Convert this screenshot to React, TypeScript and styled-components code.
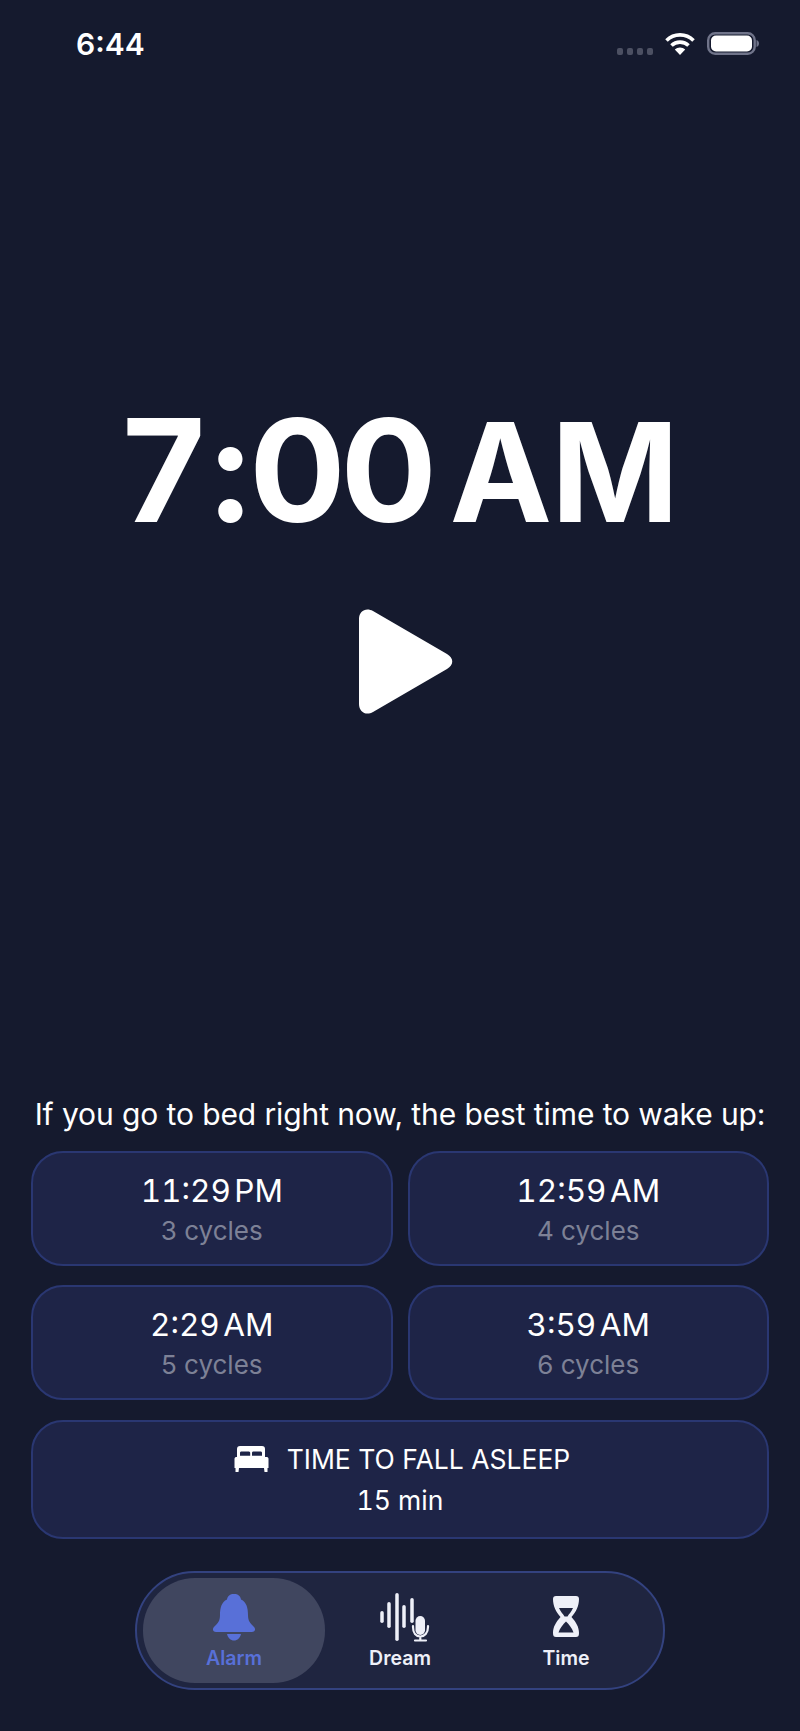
import React from "react";
import styled, { createGlobalStyle } from "styled-components";

const GlobalStyle = createGlobalStyle`
  html, body {
    margin: 0;
    padding: 0;
    background: #151a2e;
  }
`;

const Screen = styled.div`
  width: 800px;
  height: 1731px;
  background: #151a2e;
  color: #fff;
  font-family: Inter, "Liberation Sans", sans-serif;
  display: flex;
  flex-direction: column;
  overflow: hidden;
`;

const StatusBar = styled.div`
  height: 32px;
  padding: 26px 41px 0 76px;
  display: flex;
  align-items: flex-start;
  justify-content: space-between;
`;

const Clock = styled.div`
  font-size: 30px;
  line-height: 36px;
  font-weight: 600;
`;

const StatusIcons = styled.div`
  display: flex;
  align-items: center;
  gap: 12px;
  padding-top: 6px;
`;

const SignalDots = styled.div`
  display: flex;
  gap: 4px;
  padding-top: 16px;
`;

const SignalDot = styled.span`
  width: 6px;
  height: 7px;
  border-radius: 2px;
  background: #4c5062;
`;

const Hero = styled.div`
  margin-top: 340px;
  display: flex;
  flex-direction: column;
  align-items: center;
`;

const BigTime = styled.div`
  font-size: 143px;
  line-height: 143px;
  font-weight: 700;
  letter-spacing: -5px;
  word-spacing: -11px;
  white-space: nowrap;
`;

const BigHour = styled.span`
  letter-spacing: 1px;
`;

const Meridiem = styled.span`
  font-size: 137px;
  letter-spacing: -1px;
`;

const PlayButton = styled.div`
  margin-top: 65px;
  margin-left: 12px;
  display: flex;
`;

const Bottom = styled.div`
  margin-top: auto;
  padding: 0 31px 41px;
  display: flex;
  flex-direction: column;
`;

const Prompt = styled.div`
  font-size: 30px;
  line-height: 34px;
  letter-spacing: -0.1px;
  text-align: center;
  white-space: nowrap;
  margin-bottom: 20px;
`;

const CardGrid = styled.div`
  display: grid;
  grid-template-columns: 1fr 1fr;
  gap: 19px 15px;
`;

const Card = styled.div`
  box-sizing: border-box;
  height: 115px;
  padding-top: 3px;
  border-radius: 32px;
  background: #1e2447;
  border: 2px solid #2a3772;
  display: flex;
  flex-direction: column;
  align-items: center;
  justify-content: center;
`;

const CardTime = styled.div`
  font-size: 31.5px;
  line-height: 40px;
  font-variant-numeric: tabular-nums;
  word-spacing: -5px;
`;

const CardCycles = styled.div`
  font-size: 26px;
  line-height: 38px;
  color: #7d8196;
  padding-top: 1px;
`;

const SleepCard = styled(Card)`
  height: 119px;
  margin-top: 20px;
  padding-top: 1px;
`;

const SleepTitle = styled.div`
  display: flex;
  align-items: center;
  gap: 18px;
  padding-left: 4px;
  font-size: 26.5px;
  line-height: 40px;
`;

const SleepValue = styled.div`
  font-size: 26.5px;
  line-height: 42px;
  font-variant-numeric: tabular-nums;
`;

const NavBar = styled.div`
  box-sizing: border-box;
  align-self: center;
  margin-top: 32px;
  width: 530px;
  height: 119px;
  padding: 5px 6px;
  border-radius: 60px;
  background: #1f2540;
  border: 2px solid #33427f;
  display: grid;
  grid-template-columns: 182px 150px 182px;
`;

const NavItem = styled.div<{ $active?: boolean }>`
  border-radius: 52px;
  background: ${(p) => (p.$active ? "#40465f" : "transparent")};
  color: ${(p) => (p.$active ? "#5870d8" : "#eef0f8")};
  display: flex;
  flex-direction: column;
  align-items: center;
  padding-top: 12px;
  font-size: 19.5px;
  line-height: 24px;
  font-weight: 600;
`;

const NavIcon = styled.svg`
  width: 60px;
  height: 56px;
  fill: currentColor;
`;

function WifiIcon() {
  return (
    <svg width="30" height="23" viewBox="0 0 30 23" fill="none" stroke="#fff" strokeWidth="3.6">
      <path d="M1.5 8.5C9 1 21 1 28.5 8.5" />
      <path d="M6.5 13.5C11 9 19 9 23.5 13.5" />
      <path d="M15 23L9.8 17.6C12.6 14.8 17.4 14.8 20.2 17.6Z" fill="#fff" stroke="none" />
    </svg>
  );
}

function BatteryIcon() {
  return (
    <svg width="52" height="23" viewBox="0 0 52 23" fill="none">
      <rect x="1.2" y="1.2" width="46.5" height="20.6" rx="7" stroke="#70748a" strokeWidth="2.4" />
      <rect x="4" y="3.5" width="41" height="16" rx="5" fill="#fff" />
      <path d="M49.5 8C51 8.6 52 9.8 52 11.5S51 14.4 49.5 15Z" fill="#70748a" />
    </svg>
  );
}

function PlayIcon() {
  return (
    <svg width="94" height="105" viewBox="0 0 94 105">
      <path
        d="M0 10C0 2 7 -2 14 2L88 45C95 49 95 56 88 60L14 103C7 107 0 103 0 95Z"
        fill="#fff"
      />
    </svg>
  );
}

function BedIcon() {
  return (
    <svg width="35" height="26" viewBox="0 0 35 26" fill="#fff">
      <path
        fillRule="evenodd"
        d="M6 0H28C30 0 31 1 31 3V11H33C34 11 34.500 12 34.500 13V22H33.500V26H30.500L30 22H5L4.500 26H1.500V22H0.500V13C0.500 12 1 11 2 11H3V3C3 1 4 0 6 0ZM6 9.800H16.200V7C16.200 6 15.500 5.500 14.500 5.500H7.500C6.500 5.500 6 6 6 7ZM18 9.800H28V7C28 6 27.500 5.500 26.500 5.500H19.500C18.500 5.500 18 6 18 7Z"
      />
    </svg>
  );
}

function BellIcon() {
  return (
    <NavIcon viewBox="0 0 60 56">
      <path d="M30 4C34 4 36.500 6 37 9.500C42.500 12 44 18 44 25C44 31 46 33 50 37C52 39 51 42 48 42H12C9 42 8 39 10 37C14 33 16 31 16 25C16 18 17.500 12 23 9.500C23.500 6 26 4 30 4Z" />
      <path d="M23 44H37C36 48 33.500 50.500 30 50.500C26.500 50.500 24 48 23 44Z" />
    </NavIcon>
  );
}

const waveBars = [
  { x: 12, top: 21, bottom: 33 },
  { x: 19, top: 12, bottom: 38 },
  { x: 27, top: 3, bottom: 51 },
  { x: 34, top: 15, bottom: 38 },
  { x: 42, top: 8, bottom: 33 },
];

function DreamIcon() {
  return (
    <NavIcon viewBox="0 0 60 56">
      {waveBars.map((bar) => (
        <rect
          key={bar.x}
          x={bar.x - 1.75}
          y={bar.top}
          width="3.5"
          height={bar.bottom - bar.top}
          rx="1.750"
        />
      ))}
      <rect x="45.500" y="26" width="9.500" height="19" rx="4.750" />
      <path
        d="M43 36V37C43 43 46 46.500 50.300 46.500C54.500 46.500 58 43 58 37V36M50.300 46.500V50.500M45 50.500H56"
        fill="none"
        stroke="currentColor"
        strokeWidth="2.200"
        strokeLinecap="round"
      />
    </NavIcon>
  );
}

function TimeIcon() {
  return (
    <NavIcon viewBox="0 0 60 56">
      <path
        fillRule="evenodd"
        d="M20 6H40C42 6 43 7 43 9C43 16 40 22 35.500 27C40 32 43 37 43 43C43 46 42 47 40 47H20C18 47 17 46 17 43C17 37 20 32 24.500 27C20 22 17 16 17 9C17 7 18 6 20 6ZM23 18C24.500 21.500 27 24 28.500 26.500H31.500C33 24 35.500 21.500 37 18ZM30 31.500C27 34.500 24 38 22.500 42.500H37.500C36 38 33 34.500 30 31.500Z"
      />
    </NavIcon>
  );
}

const wakeTimes = [
  { time: "11:29 PM", cycles: "3 cycles" },
  { time: "12:59 AM", cycles: "4 cycles" },
  { time: "2:29 AM", cycles: "5 cycles" },
  { time: "3:59 AM", cycles: "6 cycles" },
];

export default function App() {
  return (
    <Screen>
      <GlobalStyle />
      <StatusBar>
        <Clock>6:44</Clock>
        <StatusIcons>
          <SignalDots>
            <SignalDot />
            <SignalDot />
            <SignalDot />
            <SignalDot />
          </SignalDots>
          <WifiIcon />
          <BatteryIcon />
        </StatusIcons>
      </StatusBar>

      <Hero>
        <BigTime>
          <BigHour>7</BigHour>:00 <Meridiem>AM</Meridiem>
        </BigTime>
        <PlayButton>
          <PlayIcon />
        </PlayButton>
      </Hero>

      <Bottom>
        <Prompt>If you go to bed right now, the best time to wake up:</Prompt>
        <CardGrid>
          {wakeTimes.map((item) => (
            <Card key={item.time}>
              <CardTime>{item.time}</CardTime>
              <CardCycles>{item.cycles}</CardCycles>
            </Card>
          ))}
        </CardGrid>
        <SleepCard>
          <SleepTitle>
            <BedIcon />
            TIME TO FALL ASLEEP
          </SleepTitle>
          <SleepValue>15 min</SleepValue>
        </SleepCard>
        <NavBar>
          <NavItem $active>
            <BellIcon />
            Alarm
          </NavItem>
          <NavItem>
            <DreamIcon />
            Dream
          </NavItem>
          <NavItem>
            <TimeIcon />
            Time
          </NavItem>
        </NavBar>
      </Bottom>
    </Screen>
  );
}
